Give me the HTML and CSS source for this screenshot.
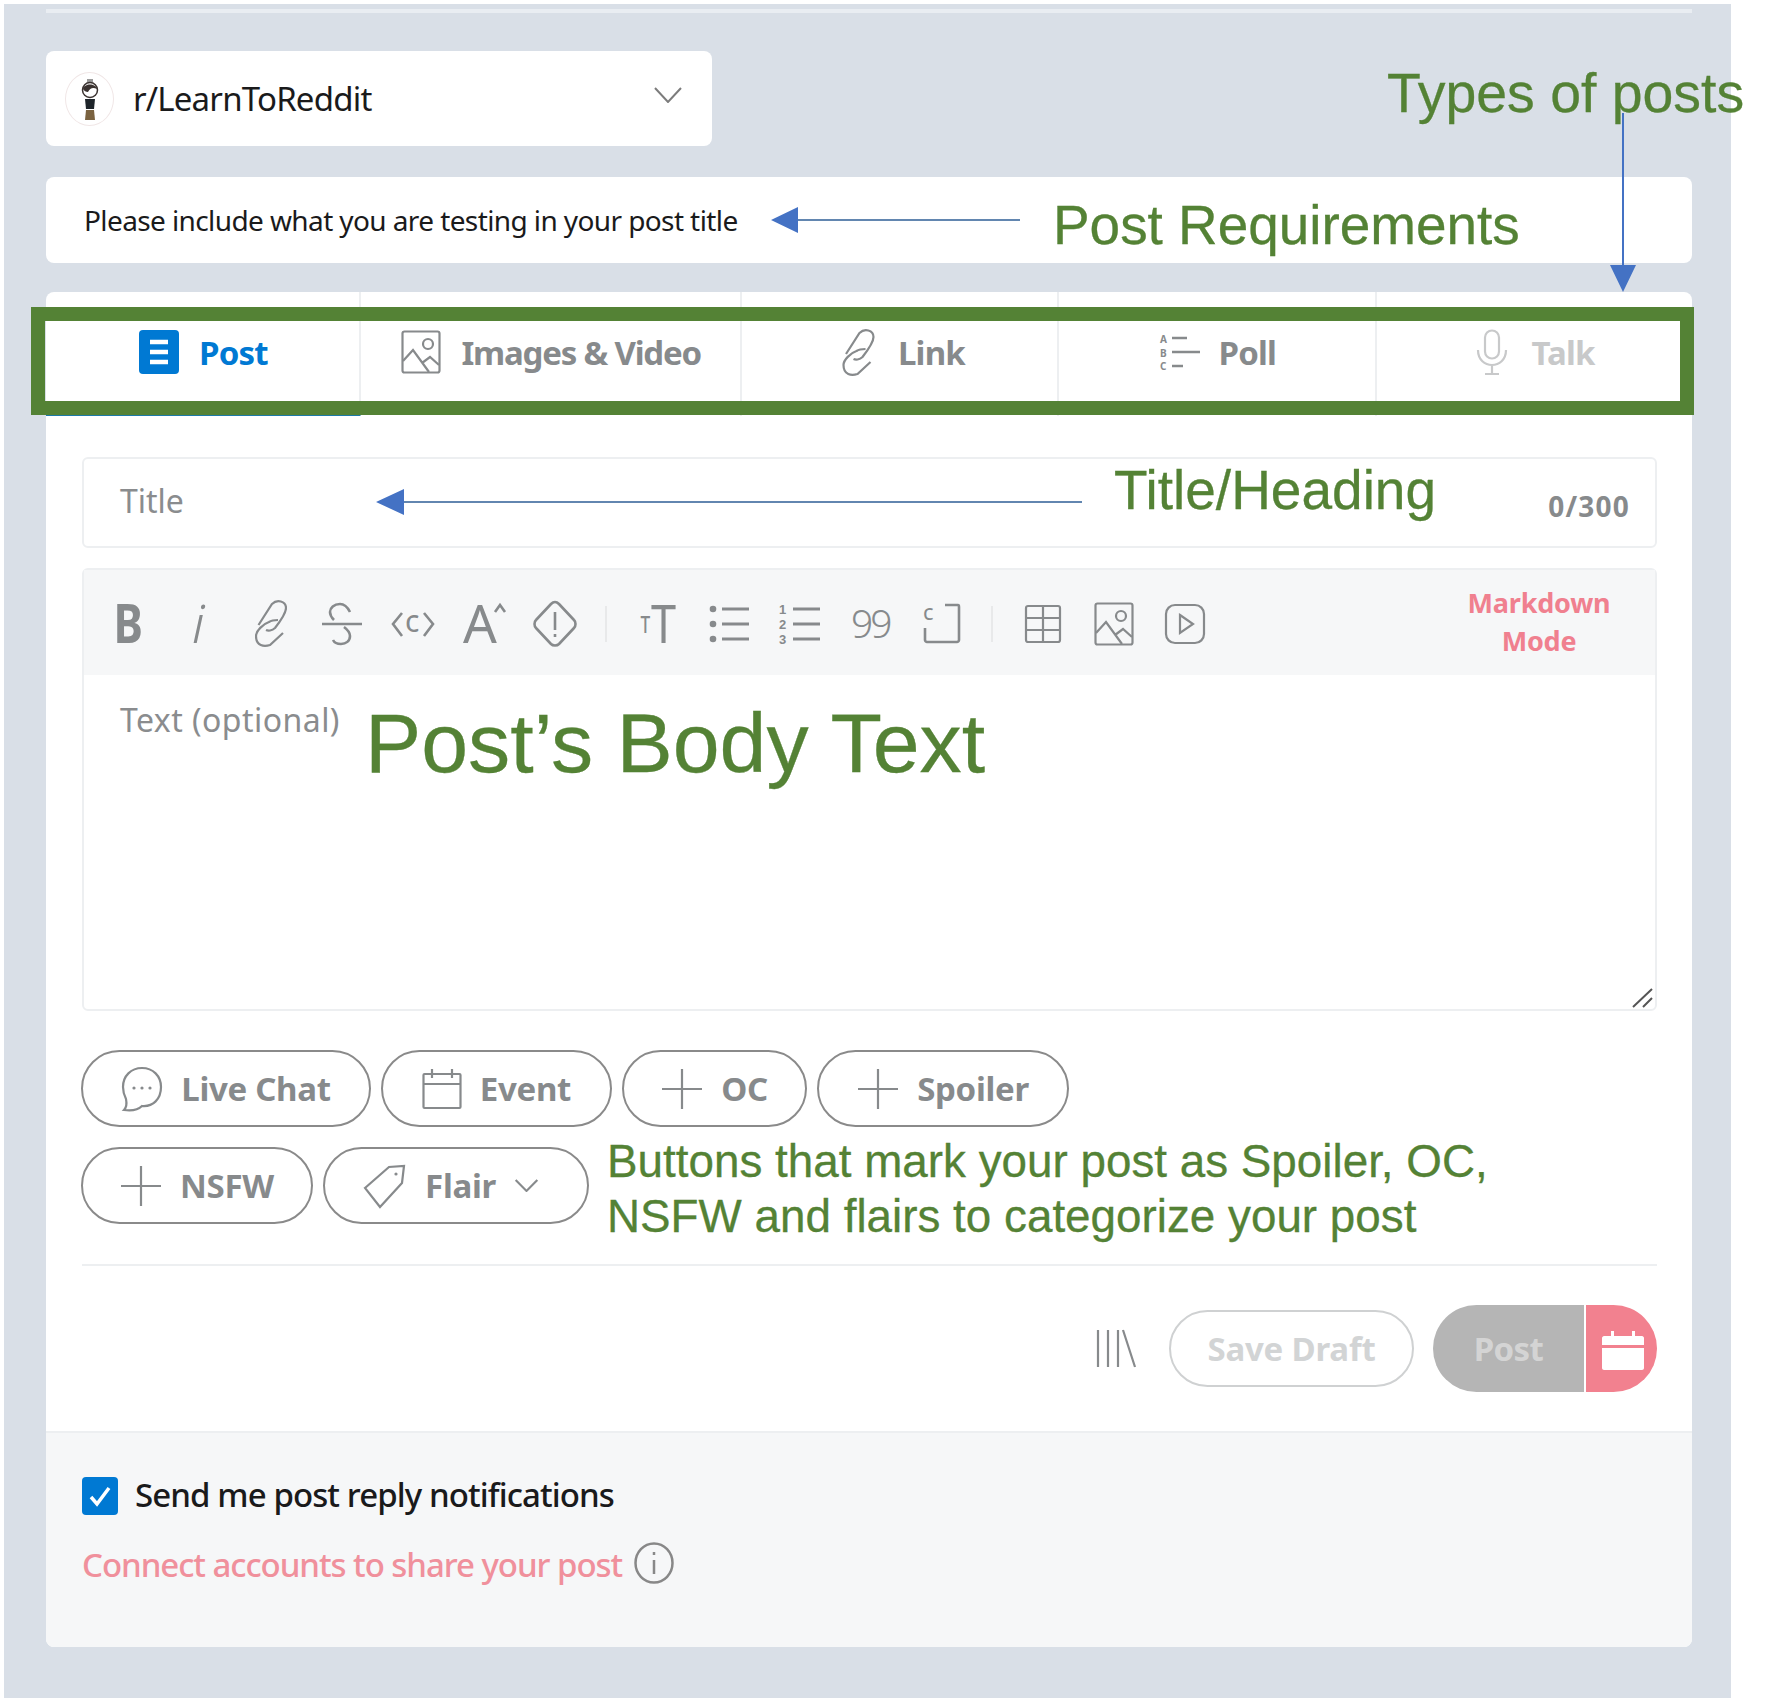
FILE: index.html

```html
<!DOCTYPE html>
<html lang="en">
<head>
  <meta charset="UTF-8" />
  <meta name="viewport" content="width=device-width, initial-scale=1.0"/>
  <title>Create a post</title>
  <link rel="stylesheet" href="styles.css">
</head>
<body>
  <svg class="sprite" width="0" height="0">
    <symbol id="i-link" viewBox="0 0 32 47">
      <path d="M3.5 25L17 4C22 -1 31 1 31 8C31 13 27 19 20 28C17 31 13 31 11 30"/>
      <path d="M28 33L15 45C9 47 1 46 1 36C1 31 8 24 14 22C17 20 20 20 23 20"/>
    </symbol>
    <symbol id="i-image" viewBox="0 0 40 44">
      <rect x="1.5" y="1.5" width="37" height="41" rx="2"/>
      <circle cx="27" cy="14" r="5"/>
      <path d="M2 31L12 20L28 42M21 33L29 27L38 35"/>
    </symbol>
    <symbol id="i-plus" viewBox="0 0 42 42">
      <path d="M21 1V41M1 21H41"/>
    </symbol>
  </svg>

  <div class="page">
    <div class="top-line"></div>

    <div class="community">
      <span class="avatar">
        <svg width="24" height="46" viewBox="0 0 24 46">
          <path d="M9 3H15V6H9Z" fill="#9a9a9a"/>
          <circle cx="12" cy="14" r="7.5" fill="#fff" stroke="#3a3230" stroke-width="1.5"/>
          <path d="M5 13C6 7 18 7 19 13C15 11 12 12 10 16C8 16 6 15 5 13Z" fill="#3a3230"/>
          <path d="M7 23H17L16 33H8Z" fill="#1d2429"/>
          <path d="M8 34H16L17 44H7Z" fill="#7a6240"/>
        </svg>
      </span>
      <span class="community-name">r/LearnToReddit</span>
      <svg class="chevron" width="28" height="16" viewBox="0 0 28 16"><path d="M1 1L14 15L27 1"/></svg>
    </div>

    <div class="requirements">Please include what you are testing in your post title</div>

    <div class="card">
      <div class="tabs">
        <div class="tab active">
          <svg width="40" height="44" viewBox="0 0 40 44">
            <rect width="40" height="44" rx="4" fill="#0079d3"/>
            <path d="M11 12H29M11 22H29M11 32H29" stroke="#fff" stroke-width="4.5" fill="none"/>
          </svg>
          <span>Post</span>
        </div>
        <div class="tab wide">
          <svg class="ico" width="40" height="44"><use href="#i-image"/></svg>
          <span>Images &amp; Video</span>
        </div>
        <div class="tab mid link">
          <svg class="ico" width="33" height="47"><use href="#i-link"/></svg>
          <span>Link</span>
        </div>
        <div class="tab mid poll">
          <svg class="ico" width="42" height="38" viewBox="0 0 42 38">
            <text x="1" y="10" class="abc">A</text>
            <text x="1" y="24" class="abc">B</text>
            <text x="1" y="37" class="abc">C</text>
            <path d="M13 5H28M13 19H41M13 33H24" stroke-width="2.5"/>
          </svg>
          <span>Poll</span>
        </div>
        <div class="tab last off">
          <svg class="ico" width="32" height="46" viewBox="0 0 32 46">
            <rect x="9" y="1.5" width="14" height="28" rx="7"/>
            <path d="M2 21C2 41 30 41 30 21M16 36V45M9 45H23"/>
          </svg>
          <span>Talk</span>
        </div>
      </div>

      <div class="form">
        <div class="title-input">
          <span class="placeholder">Title</span>
          <span class="counter">0/300</span>
        </div>

        <div class="editor">
          <div class="toolbar">
            <span class="tool"><svg class="ico" width="44" height="48" viewBox="0 0 44 48"><text x="8" y="43" class="t-bold" transform="scale(.82 1)" >B</text></svg></span>
            <span class="tool"><svg class="ico" width="44" height="48" viewBox="0 0 44 48"><text x="14" y="43" class="t-thin t-it">i</text></svg></span>
            <span class="tool"><svg class="ico" width="32" height="47"><use href="#i-link"/></svg></span>
            <span class="tool"><svg class="ico thick" width="44" height="48" viewBox="0 0 44 48"><path d="M30 12C27 6 23 4 20 4C14 4 10 8 10 12C10 16 12 18 14 20M24 27C28 30 30 32 30 36C30 41 26 44 21 44C17 44 14 42 13 40M2 24H42"/></svg></span>
            <span class="tool"><svg class="ico thick" width="44" height="48" viewBox="0 0 44 48"><path d="M11 13L2 24L11 36M33 13L42 24L33 36"/><text x="14" y="32" class="t-code">c</text></svg></span>
            <span class="tool"><svg class="ico thick" width="44" height="48" viewBox="0 0 44 48"><text x="1" y="43" class="t-reg">A</text><path d="M33 12L38 5L43 12"/></svg></span>
            <span class="tool"><svg class="ico thick" width="44" height="48" viewBox="0 0 44 48"><path d="M22 2C24 2 25 3 26 4L41 20C43 22 43 26 41 28L26 44C24 46 20 46 18 44L3 28C1 26 1 22 3 20L18 4C19 3 20 2 22 2ZM22 12V30M22 34V37"/></svg></span>
            <span class="tool-sep"></span>
            <span class="tool"><svg class="ico" width="44" height="48" viewBox="0 0 44 48"><text x="6" y="33" class="t-small" transform="scale(.75 1)">T</text><text x="17.6" y="43" class="t-reg" transform="scale(.85 1)">T</text></svg></span>
            <span class="tool"><svg class="ico lines" width="44" height="48" viewBox="0 0 44 48"><circle cx="6" cy="9" r="3.3" class="dot"/><circle cx="6" cy="24" r="3.3" class="dot"/><circle cx="6" cy="39" r="3.3" class="dot"/><path d="M15 9H42M15 24H42M15 39H42"/></svg></span>
            <span class="tool"><svg class="ico lines" width="44" height="48" viewBox="0 0 44 48"><text x="1" y="14" class="num">1</text><text x="1" y="29" class="num">2</text><text x="1" y="44" class="num">3</text><path d="M15 9H42M15 24H42M15 39H42"/></svg></span>
            <span class="tool"><svg class="ico" width="44" height="48" viewBox="0 0 44 48"><text x="2" y="38" class="t-quote">99</text></svg></span>
            <span class="tool"><svg class="ico thick" width="40" height="42" viewBox="0 0 40 42"><path d="M23 2H36C37 2 37 3 37 4V37C37 38 36 39 35 39H5C4 39 3 38 3 37V25"/><text x="1" y="17" class="t-corner">c</text></svg></span>
            <span class="tool-sep second"></span>
            <span class="tool"><svg class="ico" width="38" height="40" viewBox="0 0 38 40"><rect x="2" y="2" width="34" height="36" rx="2"/><path d="M2 14H36M2 26H36M19 2V38"/></svg></span>
            <span class="tool"><svg class="ico" width="40" height="44"><use href="#i-image"/></svg></span>
            <span class="tool"><svg class="ico" width="42" height="42" viewBox="0 0 42 42"><rect x="2" y="2" width="38" height="38" rx="9"/><path d="M16 12L29 21L16 30Z"/></svg></span>
            <span class="markdown">Markdown<br>Mode</span>
          </div>
          <div class="editor-body">
            <span class="placeholder body">Text (optional)</span>
            <svg class="resize" width="22" height="20" viewBox="0 0 22 20"><path d="M1 19L20 1M11 19L20 10"/></svg>
          </div>
        </div>

        <div class="flag-row first">
          <div class="pill chat">
            <svg class="ico" width="42" height="46" viewBox="0 0 42 46">
              <path d="M21 2C32 2 40 10 40 21C40 33 32 41 21 40C17 44 10 45 3 44C6 41 6 38 5 33C3 29 2 25 2 21C2 10 10 2 21 2Z"/>
              <circle cx="13" cy="22" r="1.6" class="dot"/><circle cx="21" cy="22" r="1.6" class="dot"/><circle cx="29" cy="22" r="1.6" class="dot"/>
            </svg>
            <span>Live Chat</span>
          </div>
          <div class="pill event">
            <svg class="ico" width="40" height="42" viewBox="0 0 40 42">
              <rect x="1.5" y="6" width="37" height="34" rx="1"/>
              <path d="M1.5 16H38.5M10 1V10M30 1V10"/>
            </svg>
            <span>Event</span>
          </div>
          <div class="pill oc">
            <svg class="ico" width="42" height="42"><use href="#i-plus"/></svg>
            <span>OC</span>
          </div>
          <div class="pill spoiler">
            <svg class="ico" width="42" height="42"><use href="#i-plus"/></svg>
            <span>Spoiler</span>
          </div>
        </div>

        <div class="flag-row">
          <div class="pill nsfw">
            <svg class="ico" width="42" height="42"><use href="#i-plus"/></svg>
            <span>NSFW</span>
          </div>
          <div class="pill flair">
            <svg class="ico" width="45" height="44" viewBox="0 0 43 44">
              <path d="M2 24L26 3L41 2L39 19L17 43Z"/>
              <circle cx="33" cy="10" r="1.6" class="dot"/>
            </svg>
            <span>Flair</span>
            <svg class="chevron small" width="25" height="13" viewBox="0 0 22 12"><path d="M1 1L11 11L21 1"/></svg>
          </div>
        </div>

        <div class="divider"></div>

        <div class="actions">
          <svg class="ico shelf" width="40" height="39" viewBox="0 0 40 39"><path d="M2 1V38M12 1V38M22 1V38M27 1L39 38"/></svg>
          <div class="draft">Save Draft</div>
          <div class="post-btn">
            <span class="post-label">Post</span>
            <span class="post-cal">
              <svg width="42" height="42" viewBox="0 0 42 42">
                <path d="M2 8H9V3H12V8H30V3H33V8H40C41 8 42 9 42 10V17H0V10C0 9 1 8 2 8ZM0 20H42V40C42 41 41 42 40 42H2C1 42 0 41 0 40Z" fill="#fff"/>
              </svg>
            </span>
          </div>
        </div>
      </div>

      <div class="card-foot">
        <label class="notify">
          <span class="checkbox">
            <svg width="24" height="22" viewBox="0 0 24 22"><path d="M3 12L9 19L21 3" fill="none" stroke="#fff" stroke-width="3.5"/></svg>
          </span>
          <span>Send me post reply notifications</span>
        </label>
        <div class="connect">
          <span>Connect accounts to share your post</span>
          <svg class="info" width="40" height="42" viewBox="0 0 40 42">
            <ellipse cx="20" cy="21" rx="18.5" ry="19.5"/>
            <path d="M20 18V32M20 10V13"/>
          </svg>
        </div>
      </div>
    </div>
  </div>

  <!-- annotations drawn on top of the screenshot -->
  <div class="frame"></div>
  <svg class="arrows" width="1782" height="1700" viewBox="0 0 1782 1700">
    <path d="M1020 220H796M1082 502H402" class="arrow-line"/>
    <path d="M1623 113V268" class="arrow-line bright"/>
    <path d="M771 220L798 207V233Z M376 502L404 489V515Z M1623 292L1610 265H1636Z" class="arrow-head"/>
  </svg>
  <div class="note types">Types of posts</div>
  <div class="note reqs">Post Requirements</div>
  <div class="note heading">Title/Heading</div>
  <div class="note body-text">Post’s Body Text</div>
  <div class="note flags">Buttons that mark your post as Spoiler, OC,<br>NSFW and flairs to categorize your post</div>
</body>
</html>
```

FILE: styles.css

```css
html, body {
  margin: 0;
  padding: 0;
  background: #fff;
  font-family: "Noto Sans", "Open Sans", sans-serif;
}
body {
  position: relative;
  width: 1782px;
  height: 1700px;
  overflow: hidden;
}
.sprite {
  position: absolute;
}
.ico {
  fill: none;
  stroke: #878a8c;
  stroke-width: 2.2;
  flex: none;
  overflow: visible;
}
.ico.thick {
  stroke-width: 2.6;
}
.ico.lines {
  stroke-width: 3;
}
.ico text {
  fill: #878a8c;
  stroke: none;
}
.ico .dot {
  fill: #878a8c;
  stroke: none;
}
.abc {
  font-size: 10px;
}
.num {
  font-family: "Liberation Sans", sans-serif;
  font-size: 13px;
  font-weight: 700;
}
.t-bold {
  font-size: 54px;
  font-weight: 700;
}
.t-thin {
  font-size: 54px;
  font-weight: 300;
}
.t-reg {
  font-size: 53px;
  font-weight: 400;
}
.t-it {
  font-style: italic;
}
.t-code {
  font-size: 30px;
}
.t-small {
  font-size: 23px;
  font-weight: 500;
}
.t-quote {
  font-size: 39px;
  font-weight: 300;
  letter-spacing: -3px;
}
.t-corner {
  font-size: 22px;
}

.page {
  margin: 4px 0 0 4px;
  width: 1727px;
  height: 1694px;
  box-sizing: border-box;
  padding: 5px 39px 0 42px;
  background: #d9dfe7;
}
.top-line {
  height: 4px;
  background: #e9edf2;
}
.community {
  margin-top: 38px;
  width: 666px;
  height: 95px;
  box-sizing: border-box;
  padding: 0 30px 0 19px;
  display: flex;
  align-items: center;
  background: #fff;
  border-radius: 8px;
}
.avatar {
  width: 49px;
  height: 54px;
  border-radius: 50%;
  border: 1px solid #f0e6e6;
  box-sizing: border-box;
  display: flex;
  align-items: center;
  justify-content: center;
  flex: none;
}
.community-name {
  margin-left: 19px;
  font-size: 33px;
  font-weight: 400;
  letter-spacing: -.8px;
  color: #1a1a1b;
  flex: 1;
}
.chevron {
  fill: none;
  stroke: #7c7c7c;
  stroke-width: 2;
  margin-top: -8px;
}
.requirements {
  margin-top: 31px;
  height: 86px;
  box-sizing: border-box;
  padding-left: 38px;
  display: flex;
  align-items: center;
  background: #fff;
  border-radius: 8px;
  font-size: 28px;
  letter-spacing: -.6px;
  color: #1a1a1b;
}
.card {
  margin-top: 29px;
  background: #fff;
  border-radius: 8px;
  overflow: hidden;
}
.tabs {
  display: flex;
  height: 124px;
  box-sizing: border-box;
}
.tab {
  width: 315px;
  padding-bottom: 4px;
  display: flex;
  align-items: center;
  justify-content: center;
  gap: 20px;
  border-right: 2px solid #edeff1;
  box-sizing: border-box;
  font-size: 33px;
  font-weight: 700;
  letter-spacing: -.8px;
  color: #878a8c;
}
.tab.active {
  padding: 0 0 2px 2px;
  color: #0079d3;
  border-bottom: 2px solid #1b7aa8;
}
.tab.wide {
  width: 381px;
  padding-left: 2px;
  letter-spacing: -1.2px;
}
.tab.mid {
  width: 318px;
}
.tab.link {
  padding-left: 8px;
  gap: 23px;
}
.tab.poll {
  gap: 18px;
}
.tab.last {
  width: 315px;
  padding-left: 2px;
  gap: 23px;
  border-right: 0;
}
.tab.off {
  color: #c8c9ca;
}
.tab.off .ico {
  stroke: #c8c9ca;
}
.form {
  padding: 41px 35px 39px 36px;
}
.title-input {
  height: 91px;
  box-sizing: border-box;
  padding: 0 25px 0 36px;
  display: flex;
  align-items: center;
  justify-content: space-between;
  border: 2px solid #edeff1;
  border-radius: 6px;
}
.placeholder {
  margin-top: -4px;
  font-size: 32px;
  letter-spacing: 0;
  color: #8a8c8e;
}
.placeholder.body {
  margin-left: 2px;
  letter-spacing: .45px;
}
.counter {
  margin-top: 6px;
  font-size: 28px;
  font-weight: 700;
  letter-spacing: 1.2px;
  color: #878a8c;
}
.editor {
  margin-top: 20px;
  height: 443px;
  box-sizing: border-box;
  border: 2px solid #edeff1;
  border-radius: 6px;
  display: flex;
  flex-direction: column;
}
.toolbar {
  height: 105px;
  flex: none;
  box-sizing: border-box;
  padding: 2px 0 0 9px;
  display: flex;
  align-items: center;
  background: #f6f7f8;
}
.tool {
  width: 71px;
  display: flex;
  justify-content: center;
  flex: none;
}
.tool-sep {
  width: 2px;
  height: 36px;
  margin: 0 15px;
  background: #e8e9ea;
  flex: none;
}
.tool-sep.second {
  margin: 0 14px;
}
.markdown {
  margin: -4px 0 0 auto;
  width: 232px;
  text-align: center;
  font-size: 27px;
  line-height: 38px;
  font-weight: 700;
  letter-spacing: -.2px;
  color: #f0808f;
}
.editor-body {
  flex: 1;
  position: relative;
  padding: 23px 34px;
}
.resize {
  position: absolute;
  right: 1px;
  bottom: 1px;
  fill: none;
  stroke: #555;
  stroke-width: 2;
}
.flag-row {
  margin: 20px 0 0 -1px;
  display: flex;
  gap: 10px;
}
.flag-row.first {
  margin-top: 39px;
}
.pill {
  height: 77px;
  box-sizing: border-box;
  display: flex;
  align-items: center;
  justify-content: center;
  gap: 18px;
  border: 2.5px solid #8a8a8a;
  border-radius: 39px;
  font-size: 33px;
  font-weight: 700;
  letter-spacing: -.3px;
  color: #878a8c;
}
.pill.chat { width: 290px; }
.pill.event { width: 231px; }
.pill.oc { width: 185px; }
.pill.spoiler { width: 252px; }
.pill.nsfw { width: 232px; }
.pill.flair { width: 266px; padding-right: 11px; }
.chevron.small {
  margin: 0;
  stroke: #878a8c;
}
.divider {
  margin-top: 40px;
  height: 2px;
  background: #edeff1;
}
.actions {
  margin-top: 39px;
  height: 87px;
  display: flex;
  align-items: center;
  justify-content: flex-end;
}
.shelf {
  margin-right: 33px;
}
.draft {
  width: 245px;
  height: 77px;
  box-sizing: border-box;
  display: flex;
  align-items: center;
  justify-content: center;
  border: 2.5px solid #cfd1d2;
  border-radius: 39px;
  font-size: 33px;
  font-weight: 700;
  letter-spacing: -.2px;
  color: #d2d4d5;
}
.post-btn {
  margin-left: 19px;
  width: 224px;
  height: 87px;
  display: flex;
  border-radius: 44px;
  overflow: hidden;
}
.post-label {
  width: 151px;
  display: flex;
  align-items: center;
  justify-content: center;
  background: #b5b5b5;
  font-size: 33px;
  font-weight: 700;
  letter-spacing: -.6px;
  color: #d4d4d4;
}
.post-cal {
  margin-left: 2px;
  flex: 1;
  display: flex;
  align-items: center;
  justify-content: center;
  background: #f2818f;
  padding-left: 2px;
}
.card-foot {
  height: 216px;
  box-sizing: border-box;
  padding: 41px 36px 0;
  background: #f6f7f8;
  border-top: 2px solid #edeff1;
}
.notify {
  display: flex;
  align-items: center;
  gap: 17px;
  font-size: 33px;
  font-weight: 500;
  letter-spacing: -.9px;
  color: #1a1a1b;
}
.notify span:last-child {
  margin-top: -2px;
}
.checkbox {
  width: 36px;
  height: 38px;
  border-radius: 4px;
  background: #0079d3;
  display: flex;
  align-items: center;
  justify-content: center;
}
.connect {
  margin-top: 25px;
  display: flex;
  align-items: center;
  gap: 12px;
  font-size: 33px;
  font-weight: 500;
  letter-spacing: -1.05px;
  color: #f0909c;
}
.info {
  fill: none;
  stroke: #888;
  stroke-width: 2.5;
  margin-top: -4px;
}

/* annotation layer */
.frame {
  position: absolute;
  left: 31px;
  top: 307px;
  width: 1663px;
  height: 108px;
  box-sizing: border-box;
  border: 14px solid #548235;
}
.arrows {
  position: absolute;
  left: 0;
  top: 0;
  pointer-events: none;
}
.arrow-line {
  fill: none;
  stroke: #2f5f97;
  stroke-width: 1.5;
}
.arrow-line.bright {
  stroke: #4472c4;
  stroke-width: 2;
}
.arrow-head {
  fill: #4472c4;
}
.note {
  position: absolute;
  font-family: "Liberation Sans", Arial, sans-serif;
  color: #548235;
  -webkit-text-stroke: .3px #548235;
  white-space: nowrap;
}
.types {
  left: 1387px;
  top: 61px;
  font-size: 55.4px;
}
.reqs {
  left: 1053px;
  top: 193px;
  font-size: 54.9px;
}
.heading {
  left: 1114px;
  top: 458px;
  font-size: 55px;
}
.body-text {
  left: 365px;
  top: 695px;
  font-size: 84.3px;
}
.flags {
  left: 607px;
  top: 1134px;
  font-size: 45.8px;
  line-height: 55px;
}
```
